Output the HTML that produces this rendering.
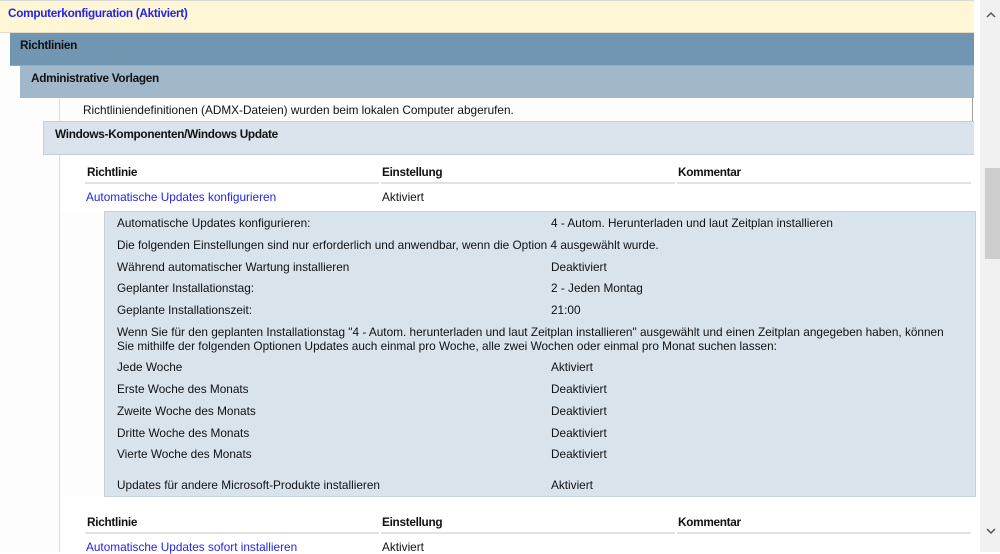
<!DOCTYPE html>
<html><head><meta charset="utf-8"><style>
body{margin:0;width:1000px;height:552px;overflow:hidden;background:#fff;font-family:"Liberation Sans",sans-serif;font-size:11.8px;color:#111;position:relative}
div{position:absolute;box-sizing:border-box}
.t{white-space:nowrap;line-height:14px}
.b{font-weight:bold;letter-spacing:-0.3px}
.l{color:#2424e6}
.hl{height:2px;background:#e2e2e2}
</style></head><body>
<div style="left:0;top:0;width:973px;height:552px;border-right:1px solid #a0a0a0;background:#fdfdfd"></div>
<div style="left:0;top:0;width:974px;height:33px;background:#fff6d5;border-top:1px solid #d8d8d8;border-bottom:1px solid #e3dcc0"></div>
<div class="t b l" style="left:8px;top:6px">Computerkonfiguration (Aktiviert)</div>
<div style="left:10px;top:33px;width:964px;height:33px;background:#7096b1;border-bottom:1px solid #9ab"></div>
<div class="t b" style="left:20px;top:38px">Richtlinien</div>
<div style="left:20px;top:66px;width:954px;height:32px;background:#a1b8ca"></div>
<div class="t b" style="left:31px;top:71px">Administrative Vorlagen</div>
<div style="left:59px;top:98px;width:1px;height:454px;background:#ddd"></div>
<div class="t" style="left:83px;top:103px">Richtliniendefinitionen (ADMX-Dateien) wurden beim lokalen Computer abgerufen.</div>
<div style="left:43px;top:121px;width:931px;height:34px;background:#dae3eb;border:1px solid #c4ccd4;border-right:none"></div>
<div class="t b" style="left:55px;top:127px">Windows-Komponenten/Windows Update</div>
<div style="left:60px;top:155px;width:913px;height:56px;background:#fff"></div>
<div class="t b" style="left:87px;top:165px">Richtlinie</div>
<div class="t b" style="left:382px;top:165px">Einstellung</div>
<div class="t b" style="left:678px;top:165px">Kommentar</div>
<div class="hl" style="left:85px;top:182px;width:294px"></div>
<div class="hl" style="left:381px;top:182px;width:294px"></div>
<div class="hl" style="left:677px;top:182px;width:294px"></div>
<div class="t l" style="left:86px;top:190px">Automatische Updates konfigurieren</div>
<div class="t" style="left:382px;top:190px">Aktiviert</div>
<div style="left:104px;top:211px;width:872px;height:286px;background:#d9e3ec;border:1px solid #c8d0d8"></div>
<div class="t" style="left:117px;top:216px">Automatische Updates konfigurieren:</div><div class="t" style="left:551px;top:216px">4 - Autom. Herunterladen und laut Zeitplan installieren</div>
<div class="t" style="left:117px;top:238px">Die folgenden Einstellungen sind nur erforderlich und anwendbar, wenn die Option 4 ausgewählt wurde.</div>
<div class="t" style="left:117px;top:260px">Während automatischer Wartung installieren</div><div class="t" style="left:551px;top:260px">Deaktiviert</div>
<div class="t" style="left:117px;top:281px">Geplanter Installationstag:</div><div class="t" style="left:551px;top:281px">2 - Jeden Montag</div>
<div class="t" style="left:117px;top:303px">Geplante Installationszeit:</div><div class="t" style="left:551px;top:303px">21:00</div>
<div class="t" style="left:117px;top:325px">Wenn Sie für den geplanten Installationstag "4 - Autom. herunterladen und laut Zeitplan installieren" ausgewählt und einen Zeitplan angegeben haben, können</div>
<div class="t" style="left:117px;top:339px">Sie mithilfe der folgenden Optionen Updates auch einmal pro Woche, alle zwei Wochen oder einmal pro Monat suchen lassen:</div>
<div class="t" style="left:117px;top:360px">Jede Woche</div><div class="t" style="left:551px;top:360px">Aktiviert</div>
<div class="t" style="left:117px;top:382px">Erste Woche des Monats</div><div class="t" style="left:551px;top:382px">Deaktiviert</div>
<div class="t" style="left:117px;top:404px">Zweite Woche des Monats</div><div class="t" style="left:551px;top:404px">Deaktiviert</div>
<div class="t" style="left:117px;top:426px">Dritte Woche des Monats</div><div class="t" style="left:551px;top:426px">Deaktiviert</div>
<div class="t" style="left:117px;top:447px">Vierte Woche des Monats</div><div class="t" style="left:551px;top:447px">Deaktiviert</div>
<div class="t" style="left:117px;top:478px">Updates für andere Microsoft-Produkte installieren</div><div class="t" style="left:551px;top:478px">Aktiviert</div>
<div style="left:60px;top:497px;width:913px;height:55px;background:#fff"></div>
<div class="t b" style="left:87px;top:515px">Richtlinie</div>
<div class="t b" style="left:382px;top:515px">Einstellung</div>
<div class="t b" style="left:678px;top:515px">Kommentar</div>
<div class="hl" style="left:85px;top:532px;width:294px"></div>
<div class="hl" style="left:381px;top:532px;width:294px"></div>
<div class="hl" style="left:677px;top:532px;width:294px"></div>
<div class="t l" style="left:86px;top:540px">Automatische Updates sofort installieren</div>
<div class="t" style="left:382px;top:540px">Aktiviert</div>
<div style="left:980px;top:0;width:20px;height:552px;background:#f0f0f0"></div>
<div style="left:985px;top:168px;width:15px;height:91px;background:#cdcdcd"></div>
<svg style="position:absolute;left:984px;top:10px" width="14" height="10"><path d="M3 7 L7 3 L11 7" stroke="#555" stroke-width="1.5" fill="none"/></svg>
<svg style="position:absolute;left:984px;top:526px" width="14" height="10"><path d="M3 3 L7 7 L11 3" stroke="#555" stroke-width="1.5" fill="none"/></svg>
</body></html>
